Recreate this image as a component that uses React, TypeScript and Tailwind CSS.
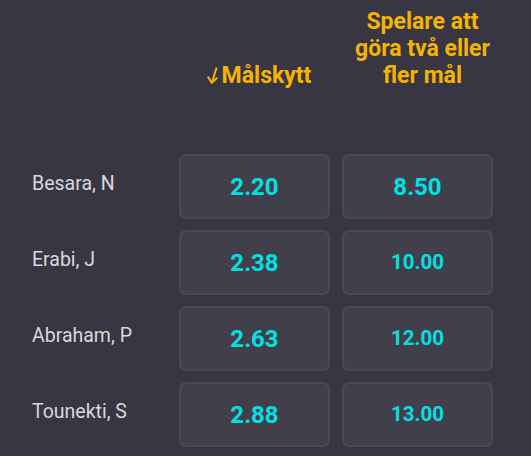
const rows = [
  { name: "Besara, N", a: "2.20", b: "8.50" },
  { name: "Erabi, J", a: "2.38", b: "10.00" },
  { name: "Abraham, P", a: "2.63", b: "12.00" },
  { name: "Tounekti, S", a: "2.88", b: "13.00" },
];

const OddsButton = ({ value }: { value: string }) => (
  <button
    className={`h-[65px] w-full rounded-[7px] border-2 border-[#4a4854] bg-[#413f4a] font-bold text-[#00e1e6] ${
      value.length > 4 ? "text-[20.5px]" : "text-[24px]"
    }`}
  >
    {value}
  </button>
);

export default function App() {
  return (
    <div
      className="h-[456px] w-[531px] overflow-hidden bg-[#383643]"
      style={{ fontFamily: "Roboto, 'Liberation Sans', sans-serif" }}
    >
      <div className="grid grid-cols-[167px_151px_151px] gap-x-[12px]">
        <div className="h-[89px]" />
        <div className="flex h-[89px] items-end justify-center pl-[9px] text-[23px] font-bold leading-[27px] text-[#f5b400]">
          <span className="flex items-end">
            <svg width="11" height="17" viewBox="0 0 11 17" className="mb-[5px] mr-[4px]">
              <path d="M9.6 0.5 L5 15.6" stroke="#f5b400" strokeWidth="2" fill="none" />
              <path d="M0.8 9.6 L4.8 15.8 L10.2 10.8" stroke="#f5b400" strokeWidth="2" fill="none" />
            </svg>
            Målskytt
          </span>
        </div>
        <div className="flex h-[89px] items-end justify-center pl-[10px] text-center text-[23px] font-bold leading-[27px] text-[#f5b400]">
          Spelare att
          <br />
          göra två eller
          <br />
          fler mål
        </div>
      </div>
      <div className="mt-[65px] flex flex-col gap-[11px]">
        {rows.map((r) => (
          <div key={r.name} className="grid grid-cols-[167px_151px_151px] gap-x-[12px]">
            <div className="flex items-center pb-[6px] pl-[32px] text-[19.5px] text-[#d9d8dc]">
              {r.name}
            </div>
            <OddsButton value={r.a} />
            <OddsButton value={r.b} />
          </div>
        ))}
      </div>
    </div>
  );
}
